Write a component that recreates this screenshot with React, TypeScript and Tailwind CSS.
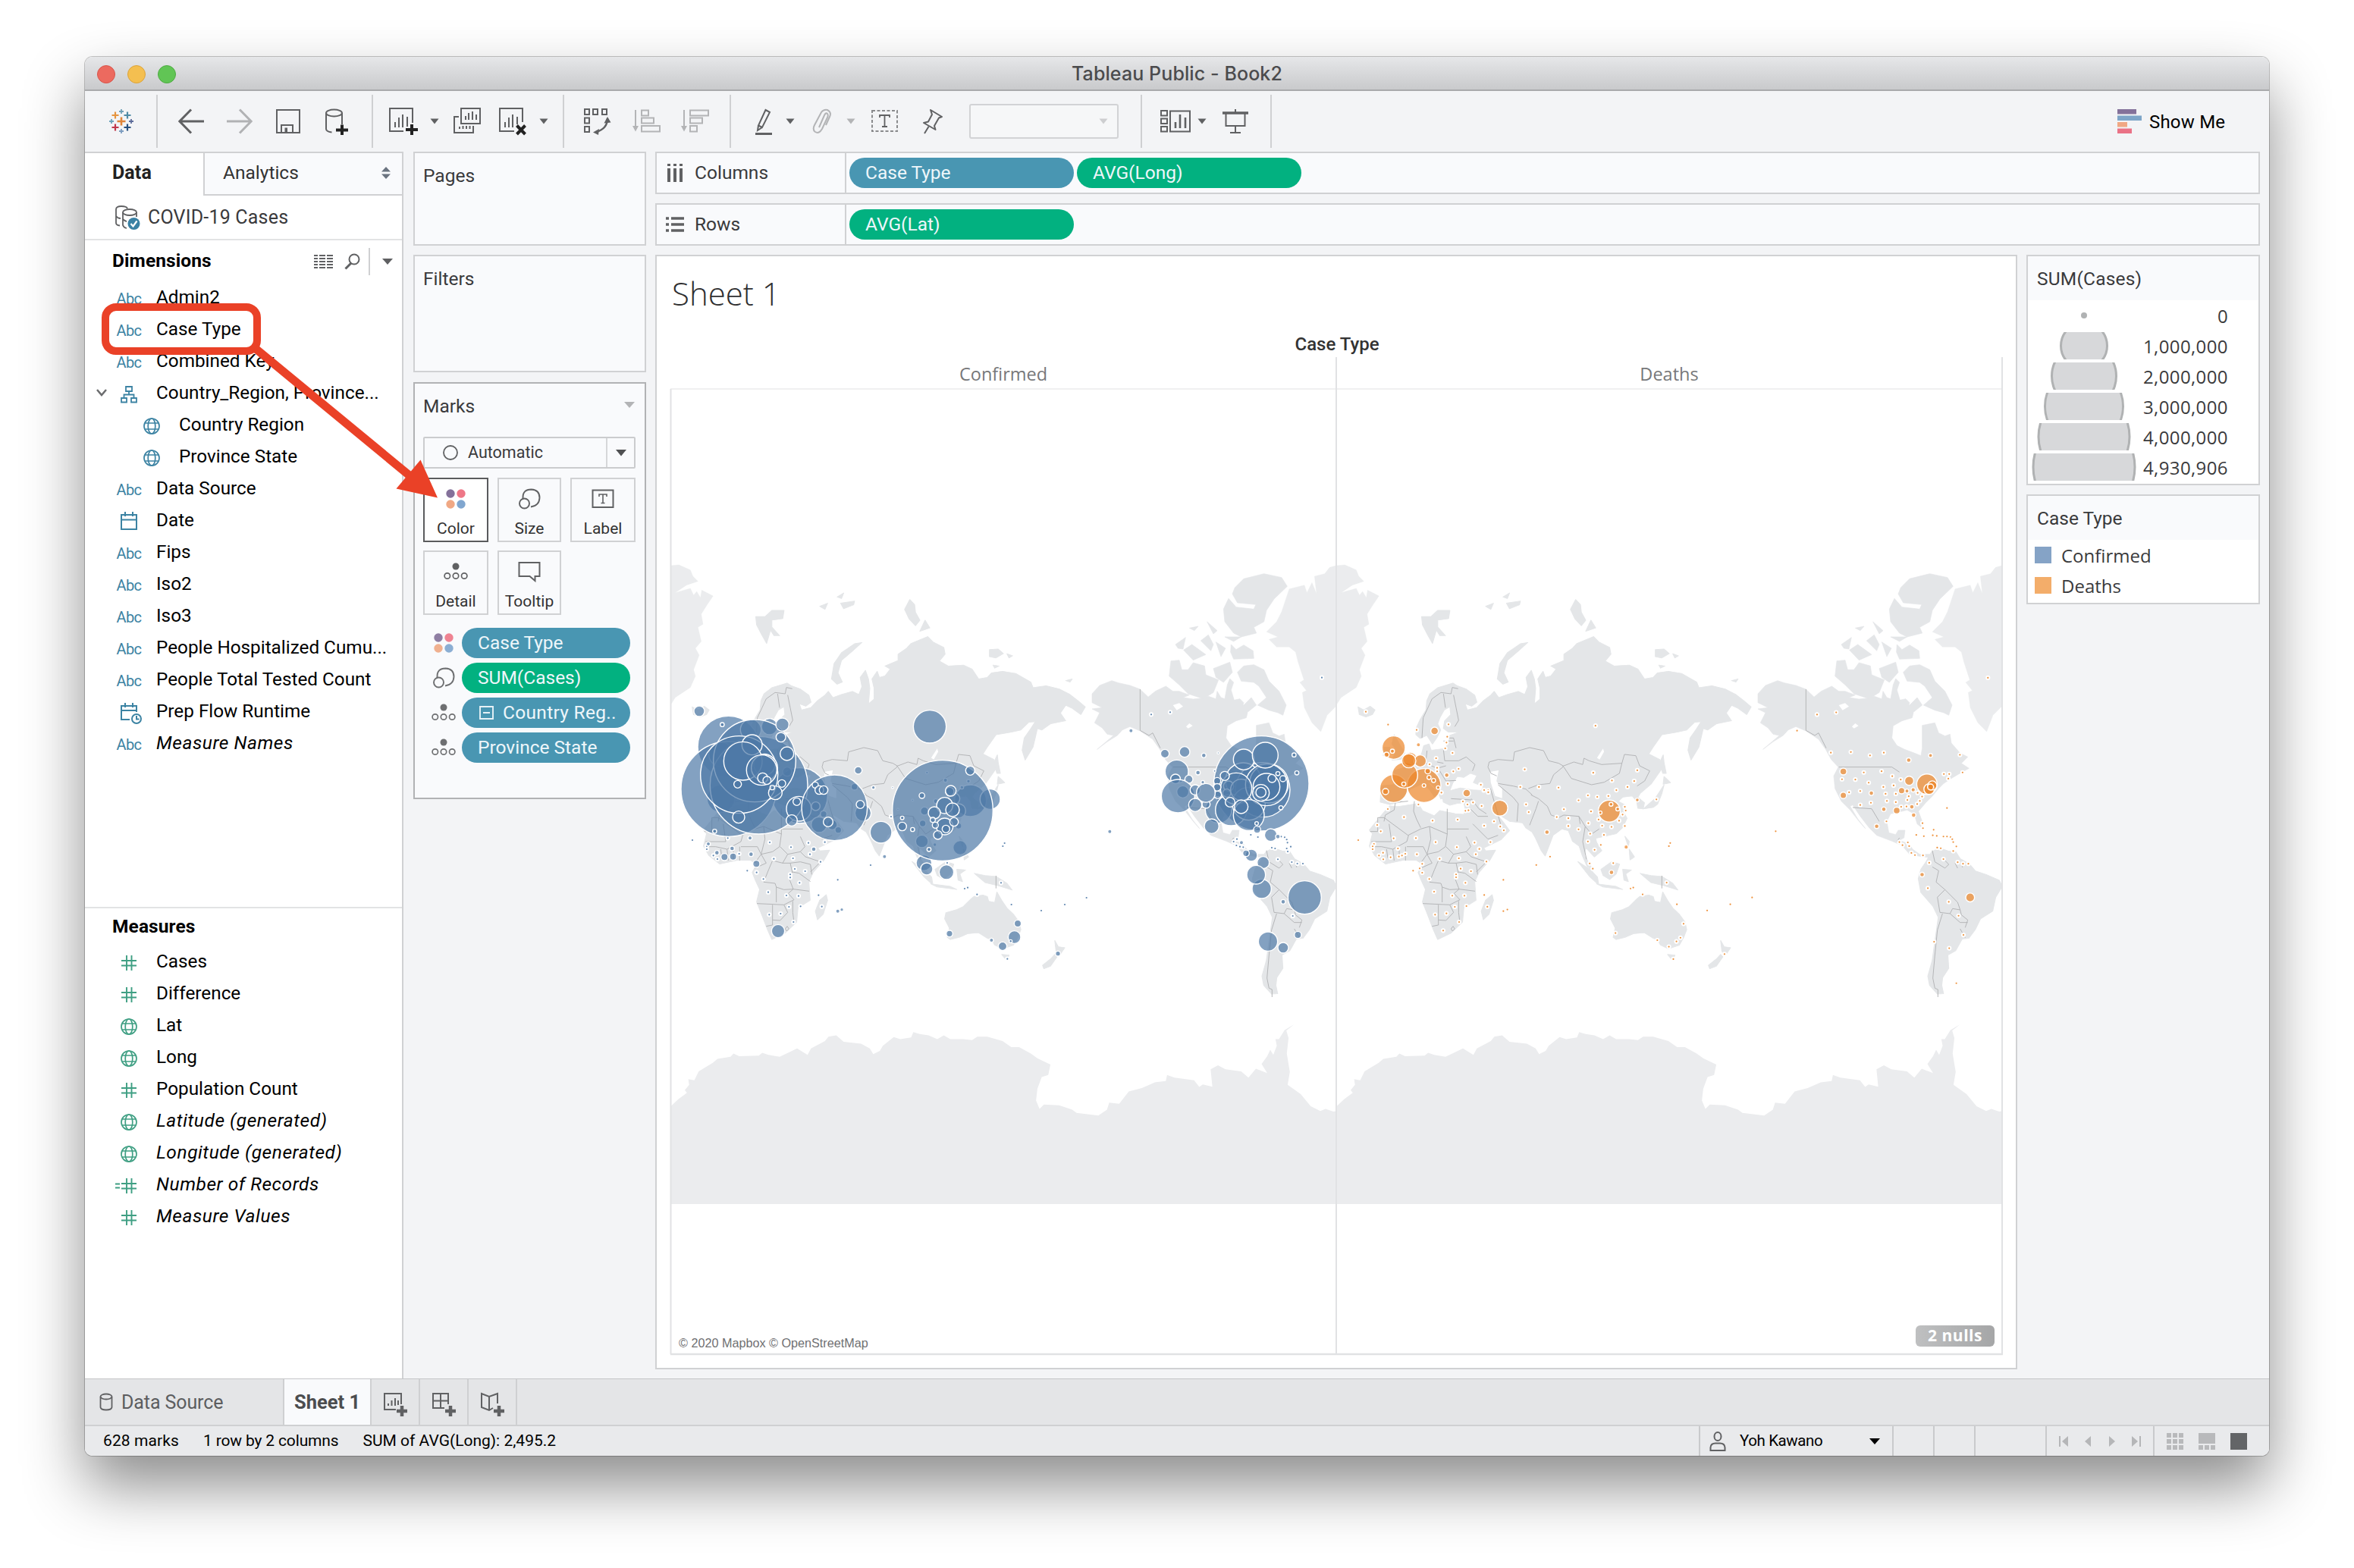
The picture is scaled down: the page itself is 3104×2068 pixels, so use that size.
import React from "react";

/* ---------- shared bits ---------- */

const Sep = ({ className = "" }: { className?: string }) => (
  <div className={"h-[70px] w-[2px] shrink-0 bg-[#cfd0d2] " + className} />
);

const Caret = ({ className = "", color = "#5f6062" }: { className?: string; color?: string }) => (
  <svg width="12" height="12" viewBox="0 0 12 12" className={"shrink-0 " + className}>
    <path d="M0.5 2.5H11.5L6 9.5Z" fill={color} />
  </svg>
);

type IcoProps = { w: number; className?: string; stroke?: string; children: React.ReactNode };
const Ico = ({ w, className = "", stroke = "#606163", children }: IcoProps) => (
  <svg
    width={w}
    height="40"
    viewBox={`0 0 ${w} 40`}
    fill="none"
    stroke={stroke}
    strokeWidth="2"
    className={"shrink-0 " + className}
  >
    {children}
  </svg>
);

/* ---------- toolbar ---------- */

const Cross = ({ x, y, r, c, w = 2.2 }: { x: number; y: number; r: number; c: string; w?: number }) => (
  <path d={`M${x - r} ${y}H${x + r}M${x} ${y - r}V${y + r}`} stroke={c} strokeWidth={w} />
);

const Toolbar = () => (
  <div className="flex h-[80px] items-center bg-[#f3f4f6]">
    <Ico w={32} className="ml-[32px]">
      <Cross x={16} y={20} r={5.5} c="#e0853a" w={2.6} />
      <Cross x={8} y={12} r={4.5} c="#e5943f" />
      <Cross x={24} y={12} r={4.5} c="#4f8ba6" />
      <Cross x={8} y={28} r={4.5} c="#c0384b" />
      <Cross x={24} y={28} r={4.5} c="#27507f" />
      <Cross x={16} y={7} r={3} c="#6fa0b7" w={1.8} />
      <Cross x={16} y={33} r={3} c="#7c9cc0" w={1.8} />
      <Cross x={3} y={20} r={3} c="#6ba3bb" w={1.8} />
      <Cross x={29} y={20} r={3} c="#5c6b9a" w={1.8} />
    </Ico>
    <Sep className="ml-[30px]" />
    <Ico w={34} className="ml-[27px]">
      <path d="M1.5 20H34M17 4.5L1.8 20L17 35.5" strokeWidth="3" />
    </Ico>
    <Ico w={34} className="ml-[30px]" stroke="#b1b2b4">
      <path d="M0 20H32M17 4.5L32.2 20L17 35.5" strokeWidth="3" />
    </Ico>
    <Ico w={32} className="ml-[31px]">
      <path d="M1 5H31V35H1Z" />
      <path d="M7 35V25H22V35M12.5 35V29.5H14V35" />
    </Ico>
    <Ico w={30} className="ml-[33px]">
      <ellipse cx="11.5" cy="9" rx="10.5" ry="4.5" />
      <path d="M1 9V30Q1 33.5 8.5 34.5M22 9V24" />
      <path d="M14 31.5H30M22 24.5V38" stroke="#222" strokeWidth="4" />
    </Ico>
    <Sep className="ml-[31px]" />
    <Ico w={38} className="ml-[21px]">
      <path d="M19 33H1V3H31V22M8 28V21M13 28V15M18 28V11M24 27V14" />
      <path d="M22 31H38M30 24V38" stroke="#222" strokeWidth="4" />
    </Ico>
    <Caret className="ml-[16px]" />
    <Ico w={36} className="ml-[19px]">
      <path d="M10 3H35V23H10ZM16 18V13M20 18V9M25 18V7M30 18V11" />
      <path d="M7 14H1V35H26V26M8 30V27M12.500 30V26M17 30V26M21.500 30V26" />
    </Ico>
    <Ico w={37} className="ml-[24px]">
      <path d="M20 33H1V3H31V21M8 28V21M13 28V15M18 28V11M24 24V14" />
      <path d="M23.500 25.500L34.500 37M34.500 25.500L23.500 37" stroke="#222" strokeWidth="4" />
    </Ico>
    <Caret className="ml-[16px]" />
    <Sep className="ml-[19px]" />
    <Ico w={36} className="ml-[26px]">
      <path d="M1 4H7V11H1ZM12 4H18V11H12ZM24 4H30V11H24ZM1 15.500H7V22.500H1ZM1 27H7V34H1Z" />
      <path d="M31 16Q31 30 16 34" strokeWidth="2.400" />
      <path d="M31 14L26.500 22.500L35.500 21.500ZM12 34.500L20 30L19 38Z" fill="#606163" stroke="none" />
    </Ico>
    <Ico w={37} className="ml-[28px]" stroke="#b3b4b6">
      <path d="M4 5V30M12 5.500H21V12.500H12ZM12 15.500H28V22.500H12ZM12 26H36V33.500H12Z" />
      <path d="M0 26H8L4 33.500Z" fill="#b3b4b6" stroke="none" />
    </Ico>
    <Ico w={37} className="ml-[27px]" stroke="#b3b4b6">
      <path d="M4 5V30M12 5.500H36V12.500H12ZM12 15.500H28V22.500H12ZM12 26H21V33.500H12Z" />
      <path d="M0 26H8L4 33.500Z" fill="#b3b4b6" stroke="none" />
    </Ico>
    <Sep className="ml-[27px]" />
    <Ico w={24} className="ml-[31px]">
      <path d="M14.500 5L20 8L10 28L5 25.500ZM5 25.500L4 32L10 28" />
      <path d="M1 36.500H23" strokeWidth="3" />
    </Ico>
    <Caret className="ml-[17px]" />
    <Ico w={26} className="ml-[23px]" stroke="#b3b4b6">
      <path d="M9 28L16 12Q18 8 20 10Q21.500 12 20 15L13 30Q9 37 4 34Q0 31 3 25L12 8Q15 4 20 5Q26 8 23 14L18 25" />
    </Ico>
    <Caret className="ml-[19px]" color="#b3b4b6" />
    <Ico w={35} className="ml-[21px]">
      <path d="M1 6H34V33H1Z" strokeDasharray="4 2.500" stroke="#8a8b8d" />
      <path d="M11 15V12H24V15M17.500 12V27M14 27H21" strokeWidth="1.800" />
    </Ico>
    <Ico w={28} className="ml-[32px]">
      <path d="M11 5L26 14L22 15.500L16 26L17.500 31L2 22L8 20.500L13 11Z M8.500 27L3 36" strokeLinejoin="round" />
    </Ico>
    <div className="ml-[34px] flex h-[46px] w-[197px] shrink-0 items-center justify-end rounded-[3px] border-2 border-[#d2d3d5] bg-[#f6f7f8] pr-3">
      <Caret color="#cdced0" />
    </div>
    <Sep className="ml-[29px]" />
    <Ico w={40} className="ml-[24px]">
      <path d="M1 6H9V12.500H1ZM1 16.500H9V23H1ZM1 27H9V33.500H1ZM13 6.500H39V33.500H13Z" />
      <path d="M20 29V21M26 29V11M33 29V15" strokeWidth="2.600" />
    </Ico>
    <Caret className="ml-[9px]" />
    <Ico w={34} className="ml-[21px]">
      <path d="M17 4V8M4.500 10V26H29.500V10M17 26V35M10 35H24" />
      <path d="M0 9H34" strokeWidth="3.500" />
    </Ico>
    <Sep className="ml-[29px]" />
    <svg width="32" height="32" viewBox="0 0 32 32" className="ml-auto shrink-0">
      <path d="M0 0H25V6.500H0Z" fill="#84719a" />
      <path d="M0 8.500H32V15H0Z" fill="#7ea5c8" />
      <path d="M0 17H13V23.500H0Z" fill="#f0a884" />
      <path d="M0 25.500H19V32H0Z" fill="#ea7286" />
    </svg>
    <span className="ml-[10px] mr-[58px] mt-[2px] w-[100px] whitespace-nowrap text-[24px] tracking-[0.2px] text-black">Show Me</span>
  </div>
);

/* ---------- data pane ---------- */

const Globe = ({ c }: { c: string }) => (
  <svg width="24" height="24" viewBox="0 0 24 24" fill="none" stroke={c} strokeWidth="1.700">
    <circle cx="12" cy="12" r="10" />
    <ellipse cx="12" cy="12" rx="4.800" ry="10" />
    <path d="M3 8H21M3 16H21" />
  </svg>
);
const Hash = ({ calc }: { calc?: boolean }) => (
  <svg width="36" height="24" viewBox="0 0 36 24" fill="none" stroke="#3f9f83" strokeWidth="1.900">
    <path d="M8 9H28M8 15.500H28M15 2V22M21.500 2V22" />
    {calc && <path d="M0 9.500H6M0 14.500H6" />}
  </svg>
);
const BLUE = "#3c83a3";
const Calendar = ({ clock }: { clock?: boolean }) => (
  <svg width="36" height="30" viewBox="0 0 36 30" fill="none" stroke={BLUE} strokeWidth="2">
    {clock ? (
      <>
        <path d="M19 24H8V6H28V14M8 12H28M13 2V8M23 2V8" />
        <circle cx="28" cy="23" r="6" />
        <path d="M28 19V23.500H31.500" />
      </>
    ) : (
      <path d="M8 6H28V25H8ZM8 12.500H28M13 2V8M23 2V8" />
    )}
  </svg>
);
const Hier = () => (
  <svg width="24" height="24" viewBox="0 0 24 24" fill="none" stroke={BLUE} strokeWidth="1.800">
    <path d="M8 2H16V8H8ZM2 17H9V22.500H2ZM15 17H22V22.500H15ZM12 8V12.500M5.500 17V12.500H18.500V17" />
  </svg>
);
const Abc = () => <span className="text-[20px] tracking-[-0.6px] text-[#3c83a3]">Abc</span>;

type Field = { icon: React.ReactNode; name: string; nested?: boolean; italic?: boolean; open?: boolean };

const dimensions: Field[] = [
  { icon: <Abc />, name: "Admin2" },
  { icon: <Abc />, name: "Case Type" },
  { icon: <Abc />, name: "Combined Key" },
  { icon: <Hier />, name: "Country_Region, Province...", open: true },
  { icon: <Globe c={BLUE} />, name: "Country Region", nested: true },
  { icon: <Globe c={BLUE} />, name: "Province State", nested: true },
  { icon: <Abc />, name: "Data Source" },
  { icon: <Calendar />, name: "Date" },
  { icon: <Abc />, name: "Fips" },
  { icon: <Abc />, name: "Iso2" },
  { icon: <Abc />, name: "Iso3" },
  { icon: <Abc />, name: "People Hospitalized Cumu..." },
  { icon: <Abc />, name: "People Total Tested Count" },
  { icon: <Calendar clock />, name: "Prep Flow Runtime" },
  { icon: <Abc />, name: "Measure Names", italic: true },
];
const GREEN = "#3f9f83";
const measures: Field[] = [
  { icon: <Hash />, name: "Cases" },
  { icon: <Hash />, name: "Difference" },
  { icon: <Globe c={GREEN} />, name: "Lat" },
  { icon: <Globe c={GREEN} />, name: "Long" },
  { icon: <Hash />, name: "Population Count" },
  { icon: <Globe c={GREEN} />, name: "Latitude (generated)", italic: true },
  { icon: <Globe c={GREEN} />, name: "Longitude (generated)", italic: true },
  { icon: <Hash calc />, name: "Number of Records", italic: true },
  { icon: <Hash />, name: "Measure Values", italic: true },
];

const FieldRow = ({ f }: { f: Field }) => (
  <div className="flex h-[42px] items-center">
    <div className="flex w-[38px] shrink-0 justify-end pr-[8px]">
      {f.open && (
        <svg width="16" height="12" viewBox="0 0 16 12" fill="none" stroke="#6b6c6e" strokeWidth="2.500">
          <path d="M2 2L8 9L14 2" />
        </svg>
      )}
    </div>
    {f.nested && <div className="w-[30px]" />}
    <div className="flex w-[40px] shrink-0 items-center justify-center pt-[3px]">{f.icon}</div>
    <span
      className={
        "ml-[16px] whitespace-nowrap text-black " +
        (f.italic ? "text-[24.500px] italic tracking-[0.550px]" : "text-[24.300px]")
      }
    >
      {f.name}
    </span>
  </div>
);

const DataPane = () => (
  <div className="flex h-full w-[420px] shrink-0 flex-col border-r-2 border-t-2 border-[#d0d1d3] bg-white">
    <div className="flex h-[56px]">
      <div className="w-[156px] pl-[36px] pt-[7px] text-[25px] font-bold tracking-[0.1px] text-[#222]">Data</div>
      <div className="flex flex-1 justify-between border-b-2 border-l-2 border-[#d0d1d3] bg-[#f9fafc] pl-[24px] pr-[15px] pt-[8px] text-[24.500px] text-[#333]">
        Analytics
        <svg width="12" height="16" viewBox="0 0 12 16" className="mt-[10px]">
          <path d="M6 0L12 6.500H0ZM6 16L0 9.500H12Z" fill="#6b7480" />
        </svg>
      </div>
    </div>
    <div className="flex h-[59px] items-center border-b-2 border-[#e2e3e4] pl-[39px] text-[25px] text-[#3a3a3c]">
      <svg width="34" height="34" viewBox="0 0 34 34" fill="none" stroke="#606163" strokeWidth="1.800">
        <path d="M2 6Q2 2 9 2Q16 2 17 5M2 6V24Q2 27 7 27.500M2 15Q4 18 8 18" />
        <ellipse cx="20" cy="10" rx="9" ry="4" />
        <path d="M11 10V27Q12 30 16 31M11 19Q14 22 16 22M29 10V16" />
        <circle cx="25.500" cy="25" r="8" fill="#3a81a4" stroke="none" />
        <path d="M21.500 25L24.500 28.500L29.500 21.500" stroke="#fff" strokeWidth="2.200" />
      </svg>
      <span className="ml-[10px] tracking-[0.2px]">COVID-19 Cases</span>
    </div>
    <div className="flex h-[54px] items-center pl-[36px] pt-[1px]">
      <span className="w-[266px] text-[24.500px] font-bold tracking-[0.1px] text-black">Dimensions</span>
      <svg width="26" height="20" viewBox="0 0 26 20" fill="#606163">
        <path d="M0 1H5V3H0ZM7 1H15V3H7ZM17 1H25V3H17ZM0 5H5V7H0ZM7 5H15V7H7ZM17 5H25V7H17ZM0 9H5V11H0ZM7 9H15V11H7ZM17 9H25V11H17ZM0 13H5V15H0ZM7 13H15V15H7ZM17 13H25V15H17ZM0 17H5V19H0ZM7 17H15V19H7ZM17 17H25V19H17Z" />
      </svg>
      <svg width="22" height="22" viewBox="0 0 22 22" fill="none" stroke="#606163" strokeWidth="2" className="ml-[14px]">
        <circle cx="13" cy="8" r="6.500" />
        <path d="M9 13L1.500 20.500" strokeWidth="3" />
      </svg>
      <div className="ml-[10px] h-[36px] w-[2px] bg-[#cfd0d2]" />
      <svg width="14" height="10" viewBox="0 0 14 10" className="ml-[16px]">
        <path d="M0 1H14L7 9Z" fill="#5f6062" />
      </svg>
    </div>
    <div className="h-[827px] border-b-2 border-[#e2e3e4]">
      {dimensions.map((f) => (
        <FieldRow key={f.name} f={f} />
      ))}
    </div>
    <div className="flex h-[49px] items-center pl-[36px] text-[24.500px] font-bold tracking-[0.1px] text-black">
      Measures
    </div>
    <div>
      {measures.map((f) => (
        <FieldRow key={f.name} f={f} />
      ))}
    </div>
  </div>
);

/* ---------- cards ---------- */

const ColorDots = () => (
  <svg width="28" height="28" viewBox="0 0 28 28">
    <circle cx="7" cy="7" r="5.700" fill="#84719a" />
    <circle cx="21" cy="7" r="5.700" fill="#ee7787" />
    <circle cx="7" cy="21" r="5.700" fill="#f0a884" />
    <circle cx="21" cy="21" r="5.700" fill="#80a6cf" />
  </svg>
);
const SizeIcon = () => (
  <svg width="30" height="28" viewBox="0 0 30 28" fill="none" stroke="#606163" strokeWidth="1.900">
    <path d="M6.500 13Q6 1.500 17.500 1.500Q28.500 2 28.500 12.500Q28 23 17 24.500" />
    <circle cx="8.500" cy="20" r="6.500" />
  </svg>
);
const DetailIcon = () => (
  <svg width="32" height="24" viewBox="0 0 32 24" fill="none" stroke="#606163" strokeWidth="1.700">
    <circle cx="16" cy="5" r="4.500" fill="#606163" stroke="none" />
    <circle cx="4.800" cy="17.500" r="3.700" />
    <circle cx="16" cy="17.500" r="3.700" />
    <circle cx="27.200" cy="17.500" r="3.700" />
  </svg>
);
const LabelIcon = () => (
  <svg width="30" height="26" viewBox="0 0 30 26" fill="none" stroke="#606163" strokeWidth="2">
    <path d="M1.500 1.500H28.500V24H1.500Z" />
    <path d="M10 10V7H20V10M15 7V18.500M12.500 18.500H17.500" strokeWidth="1.600" />
  </svg>
);
const TooltipIcon = () => (
  <svg width="30" height="28" viewBox="0 0 30 28" fill="none" stroke="#606163" strokeWidth="2">
    <path d="M1.500 2H28.500V20H22.500V26L15.500 20H1.500Z" />
  </svg>
);

const MarkButton = ({ icon, label, active }: { icon: React.ReactNode; label: string; active?: boolean }) => (
  <div
    className={
      "flex h-[85px] flex-col items-center border-2 text-[21px] text-[#333] " +
      (active ? "border-[#5a5b5d] bg-white" : "border-[#d0d1d3] bg-[#f9fafc]")
    }
  >
    <div className="flex h-[52px] items-center justify-center">{icon}</div>
    <div className="leading-[26px]">{label}</div>
  </div>
);

const Pill = ({ green, className = "", children }: { green?: boolean; className?: string; children: React.ReactNode }) => (
  <div
    className={
      "flex h-[40px] items-center rounded-full pl-[21px] text-[24.500px] whitespace-nowrap text-[#eef6fa] " +
      (green ? "bg-[#02b180] " : "bg-[#4996b2] ") +
      className
    }
  >
    {children}
  </div>
);

const MarkRow = ({ icon, green, children }: { icon: React.ReactNode; green?: boolean; children: React.ReactNode }) => (
  <div className="flex items-center">
    <div className="flex w-[51px] items-center justify-center pl-[3px] opacity-90">{icon}</div>
    <Pill green={green} className="w-[222px]">
      {children}
    </Pill>
  </div>
);

const Cards = () => (
  <div className="ml-[13px] flex w-[307px] shrink-0 flex-col text-[24.500px] text-[#3a3a3c]">
    <div className="h-[124px] border-2 border-[#d0d1d3] bg-[#f9fafc] pl-[11px] pt-[12px]">Pages</div>
    <div className="mt-[12px] h-[155px] border-2 border-[#d0d1d3] bg-[#f9fafc] pl-[11px] pt-[12px]">Filters</div>
    <div className="mt-[13px] h-[550px] border-2 border-[#b1b2b4] bg-[#f9fafc] pl-[11px] pr-[13px]">
      <div className="flex h-[70px] items-start justify-between pt-[12px]">
        Marks
        <svg width="14" height="9" viewBox="0 0 14 9" className="mt-[12px]">
          <path d="M0 0H14L7 8Z" fill="#b3b4b6" />
        </svg>
      </div>
      <div className="flex h-[42px] w-[280px] items-center rounded-[2px] border-2 border-[#cbccce] pl-[23px] text-[21.500px]">
        <svg width="22" height="22" viewBox="0 0 22 22" fill="none" stroke="#606163" strokeWidth="1.800">
          <circle cx="11" cy="11" r="9" />
        </svg>
        <span className="ml-[12px]">Automatic</span>
        <div className="ml-auto flex h-full w-[37px] items-center justify-center border-l-2 border-[#d6d7d9]">
          <svg width="14" height="10" viewBox="0 0 14 10">
            <path d="M0 1H14L7 9.500Z" fill="#4f5052" />
          </svg>
        </div>
      </div>
      <div className="mt-[12px] grid w-[280px] grid-cols-[86px_84px_86px] gap-x-3 gap-y-[11px]">
        <MarkButton active icon={<ColorDots />} label="Color" />
        <MarkButton icon={<SizeIcon />} label="Size" />
        <MarkButton icon={<LabelIcon />} label="Label" />
        <MarkButton icon={<DetailIcon />} label="Detail" />
        <MarkButton icon={<TooltipIcon />} label="Tooltip" />
      </div>
      <div className="mt-[17px] flex flex-col gap-[6px]">
        <MarkRow icon={<ColorDots />}>Case Type</MarkRow>
        <MarkRow icon={<SizeIcon />} green>
          SUM(Cases)
        </MarkRow>
        <MarkRow icon={<DetailIcon />}>
          <svg width="22" height="20" viewBox="0 0 22 20" fill="none" stroke="#e6f1f6" strokeWidth="1.900" className="mr-[11px]">
            <path d="M3 2H20V18H3ZM7 10H16" />
          </svg>
          <span className="tracking-[0.3px]">Country Reg..</span>
        </MarkRow>
        <MarkRow icon={<DetailIcon />}>Province State</MarkRow>
      </div>
    </div>
  </div>
);

/* ---------- map ---------- */

const LAND_A = [
  // Eurasia
  "M190,590 200,560 213,530 215,500 222,478 240,458 275,443 285,452 305,462 325,482 330,505 318,518 303,510 308,530 330,522 345,500 362,482 370,470 380,490 400,480 425,470 440,480 447,455 443,425 455,402 462,430 465,460 462,510 475,495 475,460 470,430 482,405 487,425 500,420 512,398 500,388 530,370 530,350 550,330 560,315 598,293 610,310 635,328 638,350 625,372 645,388 680,385 700,398 715,430 735,425 745,410 770,405 800,412 835,440 840,458 870,452 900,462 925,480 943,500 960,520 950,545 930,525 915,515 903,540 915,565 880,575 860,595 850,590 845,620 840,650 822,692 815,660 820,620 835,590 845,568 830,570 812,595 790,602 755,610 735,650 725,672 750,690 755,720 730,770 705,800 700,812 715,830 712,850 700,848 697,825 687,808 665,812 655,825 672,838 665,855 675,880 665,910 650,930 625,938 603,945 605,958 617,985 600,1005 590,990 580,975 577,1000 590,1030 597,1050 583,1035 572,1000 565,970 550,955 540,920 525,915 505,935 497,965 487,1002 478,985 465,945 457,925 443,912 435,895 405,890 385,872 378,870 392,895 405,920 385,950 345,977 335,965 320,925 308,895 300,875 303,848 300,830 285,832 268,838 253,828 250,800 275,788 292,782 320,788 340,790 345,778 322,765 330,742 315,735 300,748 285,745 275,765 268,790 258,815 247,818 240,790 225,768 215,762 235,790 243,800 232,810 220,785 205,768 195,775 178,785 165,805 155,828 130,836 108,828 110,775 145,770 150,745 135,728 165,715 185,692 203,672 208,645 220,640 225,660 255,655 265,640 268,612 288,602 265,602 253,590 256,565 270,545 268,520 255,530 245,555 240,575 247,595 238,620 228,640 215,612 200,622 190,610Z",
  // Africa
  "M130,840 150,842 195,832 205,855 232,872 245,855 280,865 308,868 318,900 328,935 343,970 350,985 373,983 360,1015 335,1055 325,1085 328,1145 300,1170 297,1215 270,1252 240,1272 230,1240 215,1185 205,1150 212,1110 202,1080 195,1055 205,1028 190,1015 160,1016 120,1028 95,1000 83,970 90,930 83,918 105,880 118,858Z",
  "M365,1127 368,1145 358,1190 345,1208 340,1180 350,1145Z",
  // Arctic islands
  "M203,228 225,228 240,208 268,208 265,235 240,240 240,262 258,290 245,290 237,272 228,315 216,285 205,255Z",
  "M350,195 368,185 362,205ZM390,165 405,152 400,170ZM398,185 430,178 428,190 405,203Z",
  "M557,173 568,190 570,215 580,240 570,258 555,235 545,205ZM592,240 603,265 580,276Z",
  "M447,312 430,316 400,345 383,380 377,430 390,447 402,440 392,410 400,370 425,340Z",
  "M740,335 760,333 772,348 755,362 740,358ZM780,348 793,355 785,362ZM748,385 762,388 752,395ZM915,435 930,430 925,440Z",
  "M57,520 70,530 85,518 96,530 90,545 75,553 60,545Z",
  "M140,610 152,640 165,670 158,690 135,692 145,660 135,640ZM118,650 130,650 128,675 115,678Z",
  // East Asia and Oceania
  "M758,675 760,700 765,735 757,735 750,700ZM760,745 775,765 758,770ZM760,772 755,800 745,835 735,845 712,850 740,815Z",
  "M562,1020 590,1045 607,1070 610,1095 590,1070ZM605,1092 650,1100 665,1110 620,1102ZM615,1045 640,1020 658,1028 650,1060 635,1078 620,1065ZM665,1045 685,1047 672,1060 678,1085 668,1080ZM705,1058 730,1065 755,1068 780,1090 792,1112 760,1098 730,1088 715,1070ZM670,938 680,955 678,972ZM680,980 692,1005 682,1015Z",
  "M640,1185 665,1175 680,1165 698,1140 705,1132 725,1128 735,1133 738,1148 752,1152 757,1118 768,1145 780,1170 795,1190 808,1215 812,1240 805,1265 795,1290 770,1302 752,1290 745,1272 735,1268 715,1250 690,1253 670,1265 650,1272 643,1265 648,1235 637,1205ZM768,1320 785,1322 780,1340Z",
  "M890,1275 898,1295 913,1298 900,1325 893,1310ZM890,1320 895,1328 880,1358 865,1366 862,1355 880,1335Z",
  // South America
  "M1375,988 1392,976 1412,985 1430,988 1440,1010 1462,1028 1475,1050 1500,1062 1530,1080 1537,1100 1522,1135 1515,1180 1487,1205 1475,1240 1460,1268 1445,1270 1430,1308 1412,1322 1414,1365 1400,1395 1398,1420 1402,1447 1388,1448 1370,1420 1366,1390 1376,1340 1383,1270 1390,1200 1378,1165 1350,1120 1344,1075 1350,1045 1362,1020Z",
];
const LAND_B = [
  // North America
  "M0,525 30,492 78,473 105,482 150,492 190,507 222,538 250,515 292,495 320,515 345,515 385,530 360,540 400,546 430,543 460,535 490,545 495,515 510,540 525,545 535,490 545,465 560,480 550,510 562,550 585,545 600,560 595,580 615,600 610,620 570,632 535,652 530,700 550,730 580,745 620,760 645,770 650,740 650,650 700,640 715,680 740,692 760,685 765,720 800,760 830,775 805,800 835,820 790,845 765,860 735,880 715,900 690,930 665,955 635,990 650,1030 645,1052 630,1040 618,1000 590,985 560,992 525,1000 510,1030 518,1075 545,1082 555,1065 582,1065 578,1095 560,1105 600,1120 612,1140 640,1160 680,1160 690,1175 640,1168 600,1160 570,1125 530,1108 470,1085 440,1055 405,1010 375,965 365,970 395,1020 425,1058 400,1030 365,985 330,950 305,900 300,850 318,815 290,785 268,745 240,705 190,672 150,655 120,668 100,690 60,715 20,745 85,690 60,685 40,660 10,640 30,600 0,585 40,580 0,560Z",
  "M600,415 640,410 680,430 700,475 740,515 768,570 755,610 735,600 700,590 655,570 690,540 660,495 640,480 590,475 575,440Z",
  "M312,395 345,392 355,430 380,430 400,402 445,415 450,450 500,470 480,520 440,545 380,525 345,490 305,455Z",
  "M555,130 565,105 600,70 680,50 750,65 772,100 720,150 690,195 680,240 640,262 650,285 590,300 560,285 525,240 520,190 540,148 570,182 640,190 648,172 575,165Z",
  "M550,330 570,350 600,332 637,355 640,385 560,388 548,360ZM330,330 370,302 360,348 340,345ZM362,352 395,330 450,370 400,392ZM430,315 460,292 480,330 470,355ZM455,240 495,275 480,288ZM490,320 528,345 510,378ZM480,425 545,400 555,440 520,480 490,460ZM385,265 420,258 405,275ZM525,300 590,300 560,318ZM590,580 630,540 650,570 600,610Z",
];
const GREENLAND =
  "M690,280 730,240 750,200 780,110 840,95 850,125 870,85 888,130 880,60 920,50 940,25 965,18 1000,15 1045,35 1055,60 1075,80 1030,95 985,125 1045,108 1058,135 1070,120 1085,145 1090,115 1135,138 1110,175 1088,210 1095,250 1075,262 1088,318 1065,345 1080,372 1058,430 1065,455 1045,500 985,540 960,580 930,610 905,675 870,640 840,580 832,520 848,512 822,480 838,470 815,400 805,360 780,340 730,340 700,310 735,300Z";
const ANTARCTICA =
  "M8,462 25,435 45,410 40,400 50,380 48,358 62,362 72,328 105,295 115,280 145,272 152,260 165,270 210,268 218,257 232,265 258,272 280,255 298,240 322,265 330,240 362,212 370,195 388,190 405,215 445,222 465,240 473,262 488,250 495,230 520,197 535,205 560,198 565,178 580,185 600,190 620,205 635,190 650,205 680,205 700,208 712,195 735,195 770,212 790,235 808,235 835,260 850,278 880,302 875,342 860,350 850,395 847,440 855,472 865,455 900,458 930,475 940,487 990,497 1010,475 1015,448 1038,452 1060,405 1090,392 1120,370 1145,365 1148,342 1165,352 1210,362 1222,388 1230,378 1252,387 1248,320 1265,305 1282,320 1318,328 1335,352 1352,318 1378,335 1365,300 1378,270 1385,245 1392,265 1400,230 1397,205 1405,205 1418,170 1440,148 1422,172 1427,200 1423,260 1430,330 1425,380 1455,415 1478,462 1500,480 1512,472 1530,482 1538,480 1538,836 8,836Z";
const BORDERS_AFRICA =
  "M1200,955 1195,985 1160,1005 1155,1030M1100,1070 1130,1070 1130,1015 1155,1015 1250,1085 1300,1060 1335,1050M1175,1040 1185,1110 1105,1110M1275,950 1272,990 1283,1020 1300,1055M1335,1050 1405,1080 1405,980M1405,1060 1490,1060M1335,1050 1340,1100 1325,1160 1370,1150 1398,1130 1405,1080M1252,1085 1245,1110 1190,1140 1145,1130 1105,1130M1245,1130 1310,1130 1325,1160 1300,1195M1240,1130 1240,1185M1190,1140 1195,1185M1165,1140 1170,1175M1215,1140 1215,1180M1400,1130 1430,1160 1480,1150 1500,1170 1560,1190 1520,1230M1430,1160 1410,1195M1370,1185 1410,1195 1440,1195 1448,1230 1438,1262 1452,1298 1415,1300 1385,1290 1380,1275 1335,1270 1355,1220 1370,1185M1325,1160 1345,1195 1300,1215M1385,1290 1385,1350M1308,1355 1415,1360 1455,1340 1432,1315 1452,1298 1515,1306M1370,1360 1370,1440 1345,1445M1370,1420 1400,1422 1430,1390 1415,1360M1450,1345 1450,1390 1455,1430M1440,1195 1480,1190 1520,1200 1525,1240M1448,1230 1475,1235 1520,1268M1480,1090 1498,1130 1480,1150M1420,1455 1428,1445 1435,1455 1426,1464 1420,1455M1440,740 1430,700 1400,700M1305,700 1310,620 1345,545 1380,520 1420,525 1425,500 1448,505M1390,525 1398,580M1430,530 1440,580 1450,630 1435,655M1390,712 1430,712M1325,750 1320,800 1365,820 1400,810M1390,745 1395,790 1450,790 1480,775 1515,805 1505,830M1375,830 1400,870 1440,868M1350,850 1375,880M1365,795 1390,800M1250,950 1200,955M1420,940 1500,945M1500,940 1530,980 1560,1000";
const BORDERS_ASIA =
  "M600,275 605,255 640,245 700,250 705,215 765,198 820,210 840,250 880,260 900,272 860,305 845,340 800,345 760,360M895,272 940,255 975,265 980,240 1000,250 1050,265 1130,260 1140,225 1185,230 1200,270 1240,290 1220,330 1190,350M900,275 930,320 1010,345 1060,335 1120,300 1130,260M600,275 612,300 635,310M770,385 800,400 835,430 850,465 880,475 900,465 960,470 965,500M765,505 790,440 800,410M640,340 700,350 750,362 775,385M640,345 700,395 720,420 715,490M610,360 630,430 650,500M960,470 985,510 1010,540 1040,520M985,510 975,570 990,640M530,440 560,470 600,470M540,500 600,560 640,545M1288,705V755";
const BORDERS_AMERICA =
  "M190,507 190,670 225,690 240,680 270,740M320,815 530,815 560,835M375,975 450,980 480,1030M740,1300 710,1330 720,1390 760,1395 800,1430 830,1430M760,1395 770,1375 800,1380 805,1400 830,1420 820,1450M690,1145 700,1190 740,1215 755,1200 735,1180M690,1210 715,1225 705,1270 740,1300 790,1350 800,1380M730,1395 710,1460 700,1560 692,1650 700,1690 712,1695 712,1725M800,1455 820,1490M550,1110 560,1095M780,1195 790,1215 M805,1200 810,1212";

const World = ({ dx }: { dx: number }) => (
  <g transform={`translate(${dx} 0)`}>
    <g fill="#e4e6e8" stroke="#e4e6e8" strokeWidth="2" strokeLinejoin="round">
      <g transform="translate(880 720) scale(.57398 .40816)">
        {LAND_A.map((d) => (
          <path key={d.slice(0, 12)} d={d} />
        ))}
      </g>
      <g transform="translate(1440 740) scale(.33333)">
        {LAND_B.map((d) => (
          <path key={d.slice(0, 12)} d={d} />
        ))}
      </g>
    </g>
    <g transform="translate(880 720) scale(.57398 .40816)" fill="#fff">
      <path d="M360,730 380,725 375,760 388,785 388,815 372,808 362,765Z" />
      <path d="M606,685 620,655 622,665 612,690Z" />
    </g>
    <g transform="translate(1440 740) scale(.33333)" fill="#fff">
      <path d="M320,570 345,562 360,575 335,590ZM372,655 385,642 398,652 380,662Z" />
    </g>
    <g fill="#ebecee" stroke="#ebecee">
      <path d={GREENLAND} transform="translate(1440 740) scale(.33333)" />
      <path d={ANTARCTICA} transform="translate(880 1300) scale(.57398 .34439)" stroke="none" />
    </g>
    <g fill="none" stroke="#b0b2b4" strokeWidth="2.800" strokeLinejoin="round">
      <path d={BORDERS_AFRICA} transform="translate(562 740) scale(.33333)" />
      <path d={BORDERS_ASIA} transform="translate(884 920) scale(.33333)" />
      <path d={BORDERS_AMERICA} transform="translate(1440 740) scale(.33333)" />
    </g>
  </g>
);

type Mark = [number, number, number];

const EAST_CONFIRMED: Mark[] = [
  [230, 195, 122], [318, 127, 41], [392, 115, 32], [200, 225, 48], [200, 400, 55], [512, 388, 110], [462, 293, 18], [230, 362, 188],
  [350, 347, 193], [333, 250, 163], [272, 305, 153], [508, 440, 49], [372, 265, 42], [415, 377, 27],
  [762, 457, 32], [728, 353, 13], [575, 430, 17], [588, 503, 31], [606, 461, 13], [640, 503, 20], [664, 524, 13],
  [649, 436, 130], [1187, 408, 63], [1265, 402, 40], [1005, 449, 16], [998, 498, 13], [995, 569, 25], [1046, 582, 7],
  [1146, 594, 28], [1088, 327, 8], [1179, 331, 7], [1153, 355, 7], [1015, 297, 5], [1140, 508, 12], [1123, 400, 22],
  [1140, 448, 28], [1050, 410, 9], [958, 406, 4], [900, 442, 4], [1003, 654, 31], [1077, 447, 199], [1014, 678, 24],
  [1026, 115, 65], [833, 533, 43], [114, 54, 21],
  [443, 107, 26], [437, 157, 19], [461, 222, 27], [323, 187, 40], [287, 251, 76], [372, 278, 52], [361, 287, 60],
  [365, 318, 20], [382, 328, 16], [266, 343, 15], [403, 356, 9], [441, 340, 15], [270, 473, 24], [205, 107, 8],
  [175, 529, 8], [500, 412, 15], [480, 486, 22], [573, 346, 12], [589, 366, 17], [606, 366, 17], [624, 492, 19],
  [751, 423, 16], [743, 288, 15], [803, 356, 7], [879, 356, 4],
  [1186, 289, 18], [1105, 372, 17], [1109, 369, 21], [1085, 427, 32], [1044, 456, 24], [1116, 444, 27],
  [1085, 510, 33], [1090, 520, 15], [1122, 492, 17], [1058, 544, 17], [1038, 484, 10], [1048, 505, 12],
  [995, 388, 11], [917, 476, 7], [917, 510, 17], [958, 522, 8], [1023, 601, 8], [1092, 691, 29],
  [1374, 894, 14], [1361, 948, 25], [1104, 934, 13], [1270, 960, 8], [1314, 984, 17], [1346, 964, 6],
  [340, 658, 14], [315, 556, 8], [214, 631, 14], [248, 629, 14], [184, 614, 9], [244, 597, 9], [319, 620, 9],
  [150, 579, 8], [567, 600, 9], [847, 629, 8], [426, 924, 26], [678, 839, 7], [662, 845, 8], [1533, 1013, 10],
];
const EAST_DOTS: [number, number][] = [
  [393, 573], [477, 592], [409, 638], [485, 636], [552, 620], [594, 650], [492, 678], [533, 687], [511, 733],
  [474, 700], [474, 712], [368, 718], [387, 770], [459, 783], [507, 785], [469, 828], [515, 826], [436, 855],
  [391, 859], [487, 888], [599, 827], [341, 692], [144, 588], [144, 600], [170, 625], [186, 639], [272, 618],
  [1308, 733], [586, 782], [662, 721], [304, 685], [87, 564], [792, 663], [546, 575], [611, 572], [227, 556],
  [1164, 756], [1176, 752], [1213, 779], [1349, 819], [1467, 843], [1315, 588], [1322, 576], [1333, 1034],
  [1560, 819], [1646, 792], [1095, 654], [873, 471],
];
const WEST_CONFIRMED: Mark[] = [
  [670, 880, 188], [675, 905, 108], [598, 868, 70], [500, 985, 52], [550, 985, 62], [620, 960, 65], [495, 870, 14],
  [540, 890, 20], [533, 918, 16], [590, 905, 42], [700, 880, 77], [690, 885, 83], [690, 893, 53], [668, 917, 33],
  [668, 915, 20], [712, 860, 16], [600, 785, 41], [685, 768, 51], [570, 900, 62], [525, 850, 18], [495, 895, 15],
  [497, 925, 15], [546, 954, 19], [620, 1005, 61], [590, 972, 27], [735, 841, 8], [755, 861, 12], [799, 767, 8],
  [810, 838, 8], [747, 976, 8], [651, 1038, 7], [653, 1063, 14], [707, 1084, 25],
  [335, 833, 46], [330, 862, 19], [383, 863, 16], [419, 837, 9], [359, 913, 24], [340, 930, 66], [408, 905, 20],
  [451, 962, 16], [450, 917, 37], [408, 965, 26], [473, 1049, 29], [438, 875, 7], [485, 830, 5], [288, 762, 17],
  [366, 755, 21], [442, 769, 9], [499, 759, 4], [154, 671, 8], [70, 1070, 8],
  [591, 1114, 8], [630, 1164, 24], [609, 1156, 13], [677, 1193, 24], [671, 1297, 38], [649, 1241, 37],
  [841, 1331, 66], [756, 1348, 9], [814, 1479, 14], [696, 1505, 38], [756, 1530, 21], [735, 1090, 9],
];
const WEST_DOTS: [number, number][] = [
  [234, 607], [309, 598], [909, 461], [735, 1180], [790, 1191], [812, 1197], [834, 1197], [794, 1404], [560, 1110],
  [571, 1125], [585, 1130], [598, 1132], [573, 1100], [628, 1083], [656, 1092], [711, 1134], [724, 1137],
  [762, 1093], [770, 1102], [773, 1114], [786, 1130], [774, 1149], [748, 1090], [770, 1137],
];
const EUROPE_DEATHS: Mark[] = [
  [1193, 738, 46], [1193, 900, 55], [1313, 888, 67], [1237, 847, 51], [1258, 784, 28], [1298, 791, 24],
  [1253, 790, 28], [1355, 672, 15], [1291, 727, 8], [1165, 766, 10], [1188, 752, 8], [1328, 831, 11],
  [1333, 856, 8], [1351, 868, 8], [1313, 888, 7], [1369, 896, 7], [1233, 882, 8], [1161, 912, 12], [1403, 847, 9],
  [1482, 918, 15],
];
const EUROPE_DEATH_DOTS: [number, number][] = [
  [1083, 596], [1171, 647], [1284, 668], [1410, 646], [1405, 695], [1402, 718], [1397, 741], [1426, 759],
  [1361, 780], [1335, 804], [1365, 818], [1365, 832], [1429, 832], [1450, 822], [1407, 881], [1382, 916],
  [1538, 885], [1551, 906], [1467, 951], [1507, 955], [1541, 969], [1485, 963], [1477, 988], [1489, 986],
  [1291, 963], [1170, 981], [1234, 1013], [1347, 1027], [1446, 1023], [1551, 1047], [1128, 1044], [1142, 1069],
  [1193, 1097], [1281, 1096], [1359, 1112], [1443, 1132], [1513, 1114], [1532, 1139], [1053, 1104], [1115, 1119],
  [1110, 1129], [1110, 1140], [1151, 1154], [1135, 1165], [1152, 1180], [1181, 1172], [1210, 1137], [1214, 1169],
  [1226, 1165], [1239, 1158], [1285, 1160], [1375, 1178], [1451, 1176], [1518, 1160], [1306, 1198], [1296, 1216],
  [1306, 1233], [1270, 1225], [1334, 1258], [1458, 1217], [1499, 1227], [1440, 1240], [1440, 1251], [1477, 1273],
  [1353, 1308], [1425, 1324], [1473, 1324], [1435, 1368], [1481, 1365], [1357, 1399], [1402, 1394], [1452, 1428],
  [1389, 1462],
];
const ASIA_DEATHS: Mark[] = [
  [388, 847, 10.5], [634, 857, 14.5], [672, 973, 2.8], [697, 821, 2.5], [494, 925, 3], [639, 1055, 3], [1348, 770, 13.5],
  [1353, 786, 7], [1360, 774, 6], [1356, 779, 4], [1308, 759, 6], [1160, 729, 4.5], [1160, 806, 4.2], [1307, 692, 3], [1223, 799, 3],
  [1291, 791, 4.2], [1280, 855, 4.5], [1251, 851, 3], [1318, 870, 3], [1314, 843, 3], [1356, 677, 2.6],
  [1445, 1136, 5.8], [1337, 1062, 3], [1235, 906, 3], [1303, 792, 2.6], [1317, 788, 2.8],
  [638, 835, 2.5], [653, 850, 2.5], [614, 862, 2.2],
];
const ASIA_DEATH_DOTS: [number, number][] = [
  [603, 581], [444, 722], [598, 733], [697, 725], [640, 758], [690, 760], [675, 779], [650, 789], [434, 779],
  [476, 779], [520, 781], [586, 806], [607, 811], [632, 808], [565, 822], [532, 851], [593, 858], [447, 835],
  [453, 860], [740, 819], [671, 855], [669, 843], [664, 868], [516, 876], [542, 880], [587, 896], [610, 884],
  [618, 904], [639, 908], [656, 888], [669, 905], [542, 905], [565, 916], [591, 930], [622, 934], [586, 955],
  [601, 982], [615, 966], [590, 1026], [597, 1043], [643, 1025], [375, 890], [389, 907], [353, 904], [397, 919],
  [367, 957], [342, 979], [358, 1020], [470, 1031], [501, 1004], [396, 1079], [353, 1128], [360, 1166],
  [396, 1180], [405, 1175], [763, 1088], [682, 1107], [688, 1104], [709, 1126], [786, 1158], [854, 1178],
  [906, 1158], [955, 1136], [768, 970], [771, 960], [1008, 922], [801, 1221], [794, 1266], [785, 1278],
  [768, 1295], [742, 1274], [648, 1251], [778, 1335], [893, 1319], [1414, 1413], [1101, 545], [1144, 538],
  [1056, 597], [1485, 426], [1132, 668], [1177, 666], [1220, 677], [1251, 668], [1422, 675], [1428, 732],
  [1398, 737], [1386, 737], [1396, 752], [1206, 732], [1246, 728], [1270, 744], [1289, 755], [1157, 754],
  [1187, 755], [1217, 765], [1250, 779], [1273, 774], [1198, 792], [1173, 796], [1255, 801], [1278, 801],
  [1222, 830], [1198, 837], [1258, 824], [1278, 828], [1304, 821], [1307, 809], [1290, 843], [1302, 842],
  [1326, 834], [1332, 824], [1337, 810], [1327, 798], [1340, 798], [1393, 847], [1257, 890], [1338, 896],
  [1339, 912], [1363, 917], [1324, 934], [1341, 938], [1361, 935], [1370, 937], [1385, 939], [1393, 939],
  [1401, 941], [1405, 948], [1407, 957], [1414, 971], [1371, 975], [1379, 977], [1407, 986], [1286, 957],
  [1293, 967], [1305, 958], [1308, 970], [1313, 992], [1321, 999], [1339, 1000], [1353, 1024], [1385, 1012],
  [1417, 1022], [1429, 1027], [1441, 1027], [1350, 1106], [1397, 1150], [1419, 1195], [1430, 1257],
  [1398, 1300], [1364, 1279], [345, 771], [352, 790], [362, 790], [362, 796],
];

type LayerProps = { ox: number; oy: number; sx: number; sy: number; rs: number; marks: Mark[]; dots: [number, number][]; color: string };
const Layer = ({ ox, oy, sx, sy, rs, marks, dots, color }: LayerProps) => (
  <g>
    {dots.map(([x, y], i) => (
      <g key={i} transform={`translate(${ox + x * sx} ${oy + y * sy})`}>
        <circle r="3.100" fill="#fff" />
        <circle r="1.100" fill={color} fillOpacity=".9" />
      </g>
    ))}
    {marks.map(([x, y, r], i) => (
      <circle
        key={i}
        cx={ox + x * sx}
        cy={oy + y * sy}
        r={r * rs}
        fill={color}
        fillOpacity=".7"
        stroke="#fff"
        strokeWidth="1.400"
      />
    ))}
  </g>
);

const T = 1 / 3;
const MapChart = () => (
  <svg width="1760" height="1318" viewBox="882 470 1760 1318" className="block">
    <clipPath id="frame">
      <rect x="884" y="513" width="1757" height="1273" />
    </clipPath>
    <g clipPath="url(#frame)">
      <World dx={-878} />
      <World dx={0} />
      <World dx={878} />
      <Layer ox={884} oy={920} sx={T} sy={T} rs={T} marks={EAST_CONFIRMED} dots={EAST_DOTS} color="#4e79a7" />
      <Layer ox={1440} oy={740} sx={T} sy={T} rs={T} marks={WEST_CONFIRMED} dots={WEST_DOTS} color="#4e79a7" />
      <Layer ox={1750} oy={720} sx={0.58673} sy={0.40816} rs={1} marks={ASIA_DEATHS} dots={ASIA_DEATH_DOTS} color="#ec8526" />
      <Layer ox={1440} oy={740} sx={T} sy={T} rs={T} marks={EUROPE_DEATHS} dots={EUROPE_DEATH_DOTS} color="#ec8526" />
    </g>
    <g stroke="#e1e2e4" strokeWidth="2" fill="none">
      <path d="M884.500 513V1786M1762 471V1786M2640 471V1786" />
      <path d="M884 513H2640" strokeWidth="1.200" />
      <path d="M884 1786H2641" strokeWidth="2.400" />
    </g>
  </svg>
);

const View = () => (
  <div className="relative h-[1470px] w-[1796px] shrink-0 border-2 border-[#d0d1d3] bg-white font-['Open_Sans',sans-serif]">
    <div className="h-[82px] pl-[20px] pt-[19px] text-[42px] font-light leading-[60px] text-[#2f2f31]">Sheet 1</div>
    <div className="h-[50px] pt-[17px] text-center font-['Roboto',sans-serif] text-[24px] font-medium leading-[34px] text-[#333]">
      <span className="ml-[2px]">Case Type</span>
    </div>
    <div className="relative ml-[16px] w-[1760px]">
      <MapChart />
      <div className="absolute left-[2px] top-0 grid w-[1756px] grid-cols-2 text-center text-[23.500px] leading-[46px] text-[#77787a]">
        <span>Confirmed</span>
        <span>Deaths</span>
      </div>
      <div className="absolute bottom-[5px] left-[13px] font-['Liberation_Sans',sans-serif] text-[16.200px] text-[#6f7072]">
        © 2020 Mapbox © OpenStreetMap
      </div>
      <div className="absolute bottom-[12px] right-[12px] flex h-[28px] w-[104px] items-center justify-center rounded-[6px] bg-linear-to-r from-[#bfc0c1] to-[#a5a6a7] text-[21px] font-bold tracking-[0.5px] text-white">
        2 nulls
      </div>
    </div>
  </div>
);

/* ---------- legends ---------- */

const sizes: [string, number][] = [
  ["0", 8],
  ["1,000,000", 64],
  ["2,000,000", 88],
  ["3,000,000", 106],
  ["4,000,000", 123],
  ["4,930,906", 137],
];

const Legends = () => (
  <div className="ml-[12px] flex w-[308px] flex-col text-[24px] text-[#3a3a3c]">
    <div className="h-[304px] border-2 border-[#d0d1d3] bg-white">
      <div className="h-[58px] bg-[#f9fafc] pl-[12px] pt-[12px] text-[24.500px] tracking-[0.2px]">SUM(Cases)</div>
      <div className="font-['Open_Sans',sans-serif]">
        {sizes.map(([label, w]) => (
          <div key={label} className="flex h-[40px] items-center">
            <div className="flex h-[36px] w-[147px] items-center justify-center overflow-hidden">
              <svg width="146" height="36" viewBox="-73 -18 146 36">
                {w < 10 ? (
                  <circle r="4" fill="#b0b2b3" />
                ) : (
                  <circle r={w / 2 - 1.5} fill="#d7d8da" stroke="#b0b2b3" strokeWidth="3" />
                )}
              </svg>
            </div>
            <span className="w-[117px] pt-[2px] text-right tracking-[0.4px]">{label}</span>
          </div>
        ))}
      </div>
    </div>
    <div className="mt-[12px] h-[145px] border-2 border-[#d0d1d3] bg-white">
      <div className="h-[58px] bg-[#f9fafc] pl-[12px] pt-[12px] text-[24.500px]">Case Type</div>
      <div className="flex h-[40px] items-center pl-[9px] font-['Open_Sans',sans-serif]">
        <div className="h-[22px] w-[22px] bg-[#85a3c6]" />
        <span className="ml-[13px] pt-[2px]">Confirmed</span>
      </div>
      <div className="flex h-[40px] items-center pl-[9px] font-['Open_Sans',sans-serif]">
        <div className="h-[22px] w-[22px] bg-[#f3ad6a]" />
        <span className="ml-[13px] pt-[2px]">Deaths</span>
      </div>
    </div>
  </div>
);

/* ---------- main ---------- */

const Shelf = ({ icon, label, children }: { icon: React.ReactNode; label: string; children: React.ReactNode }) => (
  <div className="flex h-[56px] items-center border-2 border-[#d0d1d3] bg-[#f9fafc]">
    <div className="flex h-full w-[250px] items-center border-r-2 border-[#d0d1d3] pl-[12px] text-[24.500px] text-[#3a3a3c]">
      {icon}
      <span className="ml-[14px]">{label}</span>
    </div>
    <div className="flex gap-1 pl-[4px]">{children}</div>
  </div>
);

const Main = () => (
  <div className="ml-[12px] flex w-[2116px] shrink-0 flex-col">
    <Shelf
      label="Columns"
      icon={
        <svg width="24" height="26" viewBox="0 0 24 26" stroke="#606163" strokeWidth="4">
          <path d="M4 1V4M12 1V4M20 1V4M4 7V25M12 7V25M20 7V25" />
        </svg>
      }
    >
      <Pill className="w-[296px]">Case Type</Pill>
      <Pill green className="w-[296px]">
        AVG(Long)
      </Pill>
    </Shelf>
    <div className="h-[12px]" />
    <Shelf
      label="Rows"
      icon={
        <svg width="24" height="22" viewBox="0 0 24 22" stroke="#606163" strokeWidth="3.500">
          <path d="M0 3H4M0 11H4M0 19H4M7 3H24M7 11H24M7 19H24" />
        </svg>
      }
    >
      <Pill green className="w-[296px]">
        AVG(Lat)
      </Pill>
    </Shelf>
    <div className="mt-[12px] flex">
      <View />
      <Legends />
    </div>
  </div>
);

/* ---------- bottom bars ---------- */

const Plus = () => <path d="M19 26H33M26 19V33" stroke="#606163" strokeWidth="4.500" />;

const SheetTabs = () => (
  <div className="flex h-[61px] shrink-0 items-stretch border-t-[1.500px] border-[#c5c6c8] bg-[#e4e5e7]">
    <div className="flex w-[261px] items-center pl-[19px] text-[25px] text-[#5c5d5f]">
      <svg width="18" height="24" viewBox="0 0 18 24" fill="none" stroke="#606163" strokeWidth="1.800">
        <ellipse cx="9" cy="5" rx="7.500" ry="3.500" />
        <path d="M1.500 5V19Q2 22.500 9 22.500Q16 22.500 16.500 19V5" />
      </svg>
      <span className="ml-[11px] pt-[2px] tracking-[-0.1px]">Data Source</span>
    </div>
    <div className="flex w-[117px] items-center justify-center border-x-2 border-[#cfd0d2] bg-[#f9fafc] text-[25.500px] font-bold text-[#4c4d4f]">
      Sheet 1
    </div>
    {[
      <path key="s" d="M18 24H3V3H25V17M8 19V16M12.500 19V12M17 19V9M21 18V12" />,
      <path key="d" d="M18 22H3V3H23V17M3 12.500H23M13 3V22" />,
      <path key="b" d="M18 22L13 25L3 21V3L13 7L24 3V16M13 7V25" />,
    ].map((icon, i) => (
      <div key={i} className="flex w-[64px] items-center justify-center border-r-2 border-[#cfd0d2] pt-[5px]">
        <svg width="34" height="34" viewBox="0 0 34 34" fill="none" stroke="#606163" strokeWidth="2">
          {icon}
          <Plus />
        </svg>
      </div>
    ))}
  </div>
);

const StatusBar = () => (
  <div className="flex h-[41px] shrink-0 items-stretch border-t-2 border-[#cfd0d2] bg-[#e9eaec] text-[21px] text-black">
    <div className="flex items-center gap-[32px] whitespace-nowrap pl-[24px]">
      <span className="tracking-[0.1px]">628 marks</span>
      <span className="tracking-[-0.15px]">1 row by 2 columns</span>
      <span>SUM of AVG(Long): 2,495.2</span>
    </div>
    <div className="ml-auto flex w-[255px] items-center border-l-2 border-[#c9cacc] pl-[12px] pr-[16px]">
      <svg width="22" height="28" viewBox="0 0 22 28" fill="none" stroke="#606163" strokeWidth="2">
        <ellipse cx="11" cy="7.500" rx="4.500" ry="5.500" />
        <path d="M1.500 26V22Q2 16.500 8 16.500H14Q20 16.500 20.500 22V26Z" />
      </svg>
      <span className="ml-[18px] text-[20.500px] tracking-[-0.4px]">Yoh Kawano</span>
      <svg width="14" height="9" viewBox="0 0 14 9" className="ml-auto">
        <path d="M0 1H14L7 9Z" />
      </svg>
    </div>
    <div className="w-[54px] border-l-2 border-[#c9cacc]" />
    <div className="w-[54px] border-l-2 border-[#c9cacc]" />
    <div className="w-[94px] border-l-2 border-[#c9cacc]" />
    <div className="flex w-[142px] items-center border-l-2 border-[#c9cacc] pl-[16px]">
      <svg width="110" height="16" viewBox="0 0 110 16" fill="#b5b6b8">
        <path d="M0 1H2V15H0ZM12 1V15L4 8ZM42 1V15L34 8ZM66 1L74 8L66 15ZM96 1L104 8L96 15ZM106 1H108V15H106Z" />
      </svg>
    </div>
    <div className="flex w-[153px] items-center gap-[20px] border-l-2 border-[#c9cacc] pl-[16px]">
      <svg width="22" height="22" viewBox="0 0 22 22" fill="#b8b9bb">
        <path d="M0 0H6V6H0ZM8 0H14V6H8ZM16 0H22V6H16ZM0 8H6V14H0ZM8 8H14V14H8ZM16 8H22V14H16ZM0 16H6V22H0ZM8 16H14V22H8ZM16 16H22V22H16Z" />
      </svg>
      <svg width="22" height="22" viewBox="0 0 22 22" fill="#b8b9bb">
        <path d="M0 0H22V14H0ZM0 16H6V22H0ZM8 16H14V22H8ZM16 16H22V22H16Z" />
      </svg>
      <div className="h-[22px] w-[22px] bg-[#636567]" />
    </div>
  </div>
);

export default function App() {
  return (
    <div className="h-[2068px] w-[3104px] overflow-hidden bg-white pl-[112px] pt-[75px] font-['Roboto',sans-serif]">
      <div className="relative h-[1845px] w-[2880px] rounded-[10px] shadow-[0_0_0_1px_rgba(0,0,0,0.22),0_40px_80px_rgba(0,0,0,0.45)]">
        <div className="flex h-full flex-col overflow-hidden rounded-[10px] bg-[#f3f4f6]">
          <div className="flex h-[45px] shrink-0 items-center border-b-2 border-[#a9aaac] bg-linear-to-b from-[#e6e7e9] to-[#c9cacc] pl-[16px] pt-[2px]">
            <div className="flex gap-4">
              <div className="h-[24px] w-[24px] rounded-full border border-[#d9544a] bg-[#ec6a5f]" />
              <div className="h-[24px] w-[24px] rounded-full border border-[#dca33a] bg-[#f4bf50]" />
              <div className="h-[24px] w-[24px] rounded-full border border-[#4eab42] bg-[#61c555]" />
            </div>
            <div className="flex-1 pr-[120px] text-center font-['Inter',sans-serif] text-[25px] font-medium tracking-[0.1px] text-[#4b4b4d]">
              Tableau Public - Book2
            </div>
          </div>
          <Toolbar />
          <div className="flex h-[1618px] shrink-0">
            <DataPane />
            <Cards />
            <Main />
          </div>
          <SheetTabs />
          <StatusBar />
        </div>
        <svg
          width="480"
          height="280"
          viewBox="124 390 480 280"
          className="pointer-events-none absolute left-[12px] top-[315px]"
        >
          <rect x="139" y="405" width="200" height="58" rx="14" fill="none" stroke="#ea4127" strokeWidth="10" />
          <path d="M336 459L541 628" stroke="#ea4127" strokeWidth="11" />
          <path d="M577 656.500L554.500 606.500L522.500 644.500Z" fill="#ea4127" />
        </svg>
      </div>
    </div>
  );
}
